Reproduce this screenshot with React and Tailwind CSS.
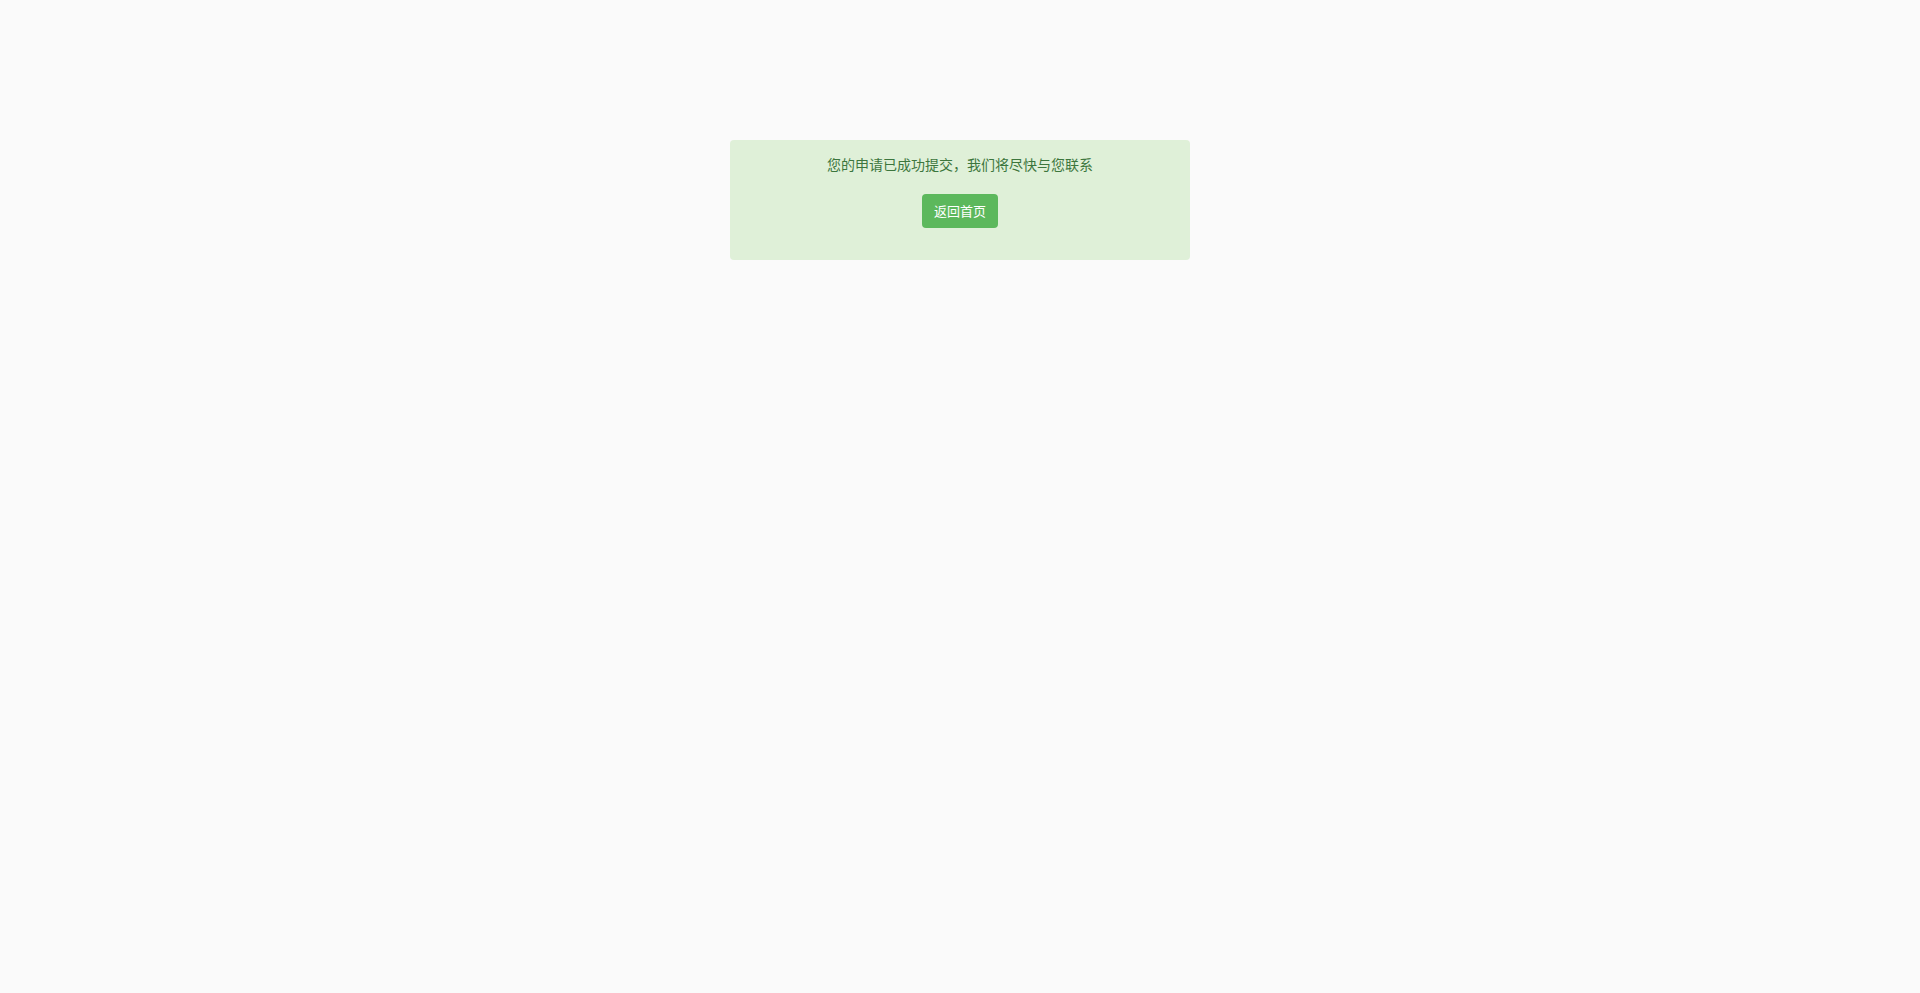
export default function App() {
  return (
    <div
      className="min-h-screen bg-[#fafafa] pt-[140px]"
      style={{ fontFamily: '"Noto Sans", "Noto Sans CJK SC", sans-serif' }}
    >
      <div className="mx-auto w-[460px] rounded bg-[#dff0d8] px-[15px] pt-[15px] pb-[32px] text-center">
        <p className="text-[14px] leading-[20px] text-[#3c763d]">
          您的申请已成功提交，我们将尽快与您联系
        </p>
        <button
          type="button"
          className="mt-[19px] h-[34px] rounded bg-[#5cb85c] px-3 text-[13px] leading-[20px] text-white"
        >
          返回首页
        </button>
      </div>
    </div>
  );
}
